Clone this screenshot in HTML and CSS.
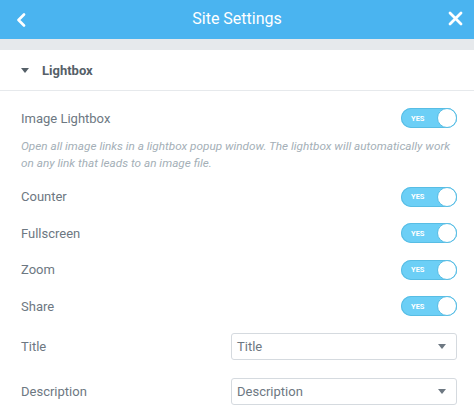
FILE: index.html
```html
<!DOCTYPE html>
<html>
<head>
<meta charset="utf-8">
<link rel="stylesheet" href="styles.css">
</head>
<body>
<div class="panel">
  <header class="top">
    <span class="icon-btn back">
      <svg width="10" height="14" viewBox="0 0 10 14"><path d="M8 1.5 L2.5 7 L8 12.5" fill="none" stroke="#fff" stroke-width="2.6" stroke-linecap="round" stroke-linejoin="round"/></svg>
    </span>
    <span class="title">Site Settings</span>
    <span class="icon-btn close">
      <svg width="15" height="15" viewBox="0 0 15 15"><path d="M2 2 L13 13 M13 2 L2 13" fill="none" stroke="#fff" stroke-width="2.8" stroke-linecap="round"/></svg>
    </span>
  </header>
  <div class="strip"></div>
  <div class="section-head">
    <span class="caret"></span>
    <span class="section-title">Lightbox</span>
  </div>
  <div class="controls">
    <div class="group">
      <div class="row">
        <span class="label">Image Lightbox</span>
        <span class="switch"><span class="yes">YES</span><span class="knob"></span></span>
      </div>
      <p class="desc">Open all image links in a lightbox popup window. The lightbox will automatically work on any link that leads to an image file.</p>
    </div>
    <div class="row">
      <span class="label">Counter</span>
      <span class="switch"><span class="yes">YES</span><span class="knob"></span></span>
    </div>
    <div class="row">
      <span class="label">Fullscreen</span>
      <span class="switch"><span class="yes">YES</span><span class="knob"></span></span>
    </div>
    <div class="row">
      <span class="label">Zoom</span>
      <span class="switch"><span class="yes">YES</span><span class="knob"></span></span>
    </div>
    <div class="row">
      <span class="label">Share</span>
      <span class="switch"><span class="yes">YES</span><span class="knob"></span></span>
    </div>
    <div class="row select-row">
      <span class="label">Title</span>
      <span class="select"><span class="sel-text">Title</span><span class="sel-arrow"></span></span>
    </div>
    <div class="row select-row last">
      <span class="label">Description</span>
      <span class="select"><span class="sel-text">Description</span><span class="sel-arrow"></span></span>
    </div>
  </div>
</div>
</body>
</html>
```
FILE: styles.css
```css
* { box-sizing: border-box; }
html, body { margin: 0; padding: 0; background: #fff; }
body { font-family: Roboto, "Liberation Sans", sans-serif; width: 474px; height: 417px; overflow: hidden; }
.panel { width: 474px; }
.top {
  height: 39px;
  background: #4ab4f0;
  display: flex;
  align-items: center;
  justify-content: space-between;
  padding: 0 10px 0 15px;
}
.icon-btn { display: flex; align-items: center; justify-content: center; }
.back { width: 12px; height: 39px; }
.close { width: 17px; height: 39px; margin-top: -3px; }
.title { color: #fff; font-size: 16px; font-weight: 400; margin-top: -2px; }
.strip { height: 11px; background: #e6e9ec; }
.section-head {
  height: 41px;
  border-bottom: 1px solid #e6e9ec;
  display: flex;
  align-items: center;
  padding-left: 21px;
}
.caret {
  width: 0; height: 0;
  border-left: 4px solid transparent;
  border-right: 4px solid transparent;
  border-top: 5px solid #556068;
  margin-right: 13px;
}
.section-title { font-size: 13px; font-weight: 700; color: #556068; }
.controls {
  padding: 17px 17px 0 21px;
  display: flex;
  flex-direction: column;
  gap: 16.5px;
}
.group { display: flex; flex-direction: column; }
.row {
  display: flex;
  align-items: center;
  justify-content: space-between;
  height: 20px;
}
.label { font-size: 13px; color: #6d7882; }
.desc {
  margin: 10px 0 -2px 0;
  font-size: 11.75px;
  line-height: 17px;
  font-style: italic;
  color: #a4afb7;
}
.switch {
  position: relative;
  width: 56px;
  height: 20px;
  border-radius: 10px;
  background: #6ccff6;
  display: flex;
  align-items: center;
  box-shadow: inset 0 0 0 1px #58bde4;
}
.yes { color: #fff; font-size: 7.5px; font-weight: 700; margin-left: 10px; }
.knob {
  position: absolute;
  right: 0; top: 0;
  width: 20px; height: 20px;
  border-radius: 50%;
  background: #fff;
  border: 1.5px solid #58bde4;
}
.select-row { height: 27px; }
.select-row.last { margin-top: 1.5px; }
.select {
  width: 226px;
  height: 27px;
  border: 1px solid #d5dadf;
  border-radius: 3px;
  display: flex;
  align-items: center;
  justify-content: space-between;
  padding: 0 10px 0 5px;
}
.sel-text { font-size: 13px; color: #6d7882; }
.sel-arrow {
  width: 0; height: 0;
  border-left: 4px solid transparent;
  border-right: 4px solid transparent;
  border-top: 5px solid #6d7882;
}
```
